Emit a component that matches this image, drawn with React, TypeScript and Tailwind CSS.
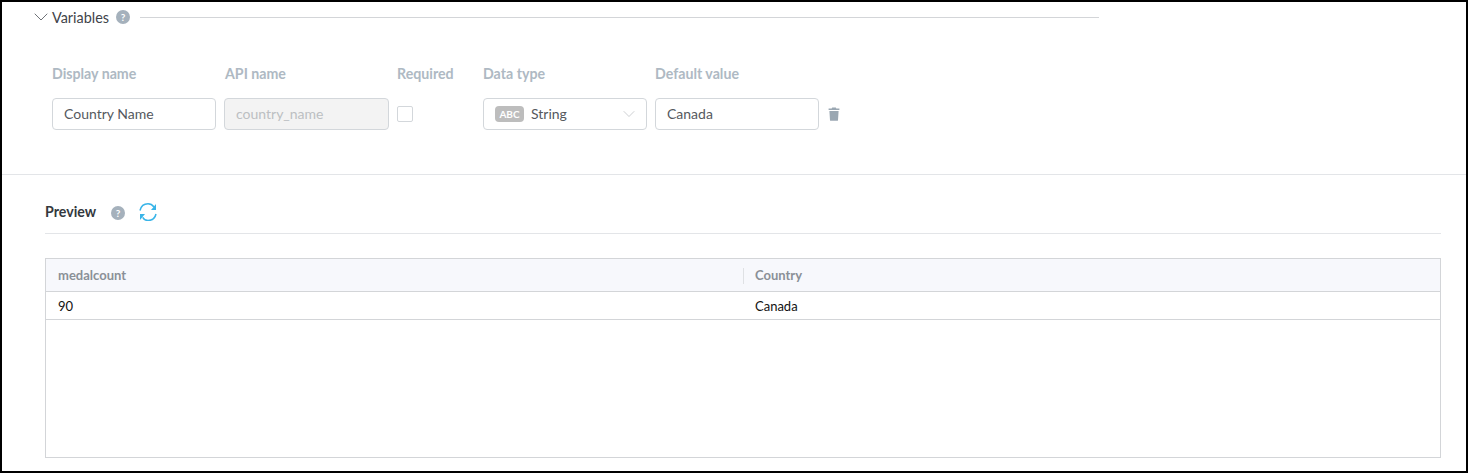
import { ChevronDown } from "lucide-react";

function HelpDot() {
  return (
    <span className="flex h-[14px] w-[14px] items-center justify-center rounded-full bg-[#a5b1bc] text-[10px] font-bold leading-none text-white">
      ?
    </span>
  );
}

function Label({ text, className }: { text: string; className: string }) {
  return <div className={`text-[14.2px] font-bold leading-5 text-[#aeb9c3] ${className}`}>{text}</div>;
}

function TrashIcon() {
  return (
    <svg width="12" height="14" viewBox="0 0 12 14" fill="#9aa7b2">
      <path d="M4.2 0.6h3.6l.5 1H11.400v1.500H.6V1.600h3.100z" />
      <path d="M1.400 4h9.200l-.6 9.200c0 .3-.3.6-.6.6H2.600c-.3 0-.6-.3-.6-.6z" />
    </svg>
  );
}

function RefreshIcon() {
  return (
    <svg width="18" height="18" viewBox="0 0 18 18" fill="none" stroke="#38b4e8" strokeWidth="1.5">
      <path d="M1 7.500C2 3.200 5.400 .8 9 .8c2.300 0 4.400 1.100 6 3.200" />
      <path d="M17 1v6h-5z" fill="#38b4e8" stroke="none" />
      <path d="M17 11c-1 4.200-4.400 6.500-8 6.500-2.300 0-4.200-1.100-5.300-3.200" />
      <path d="M1 17v-6h5z" fill="#38b4e8" stroke="none" />
    </svg>
  );
}

export default function App() {
  return (
    <div className="h-[473px] w-[1468px] overflow-hidden border-2 border-black bg-white font-['Lato',sans-serif]">
      <div className="h-[173px] border-b border-[#e3e5e8]">
        <div className="flex h-[30px] items-center pl-[27px]">
          <ChevronDown size={24} strokeWidth={0.8} className="text-[#4a4f55]" />
          <span className="ml-[-1px] mt-[1px] text-[14.4px] text-[#3f444a]">Variables</span>
          <span className="ml-[7px]">
            <HelpDot />
          </span>
          <div className="ml-[10px] h-px w-[959px] bg-[#d3d5d8]" />
        </div>

        <div className="mt-[32px] flex pl-[50px]">
          <Label text="Display name" className="w-[173px]" />
          <Label text="API name" className="w-[172px]" />
          <Label text="Required" className="w-[86px]" />
          <Label text="Data type" className="w-[172px]" />
          <Label text="Default value" className="w-[172px]" />
        </div>

        <div className="mt-[14px] flex items-center pl-[50px]">
          <div className="flex h-[32px] w-[164px] items-center rounded border border-[#d3d7db] px-[11px] text-sm text-[#55595e]">
            Country Name
          </div>
          <div className="ml-[8px] flex h-[32px] w-[165px] items-center rounded border border-[#d3d7db] bg-[#f3f3f3] px-[11px] text-sm text-[#bcbfc2]">
            country_name
          </div>
          <div className="ml-[8px] h-[16px] w-[16px] rounded-[2px] border border-[#d3d7db]" />
          <div className="ml-[70px] flex h-[32px] w-[164px] items-center rounded border border-[#d3d7db] pl-[11px] pr-[7px] text-sm text-[#55595e]">
            <span className="flex h-[16px] w-[29px] items-center justify-center rounded-[4px] bg-[#bdbdbd] text-[10px] font-bold text-white">
              ABC
            </span>
            <span className="ml-[7px] flex-1">String</span>
            <ChevronDown size={20} strokeWidth={0.7} className="text-[#a8adb2]" />
          </div>
          <div className="ml-[8px] flex h-[32px] w-[164px] items-center rounded border border-[#d3d7db] px-[11px] text-sm text-[#55595e]">
            Canada
          </div>
          <span className="ml-[9px]">
            <TrashIcon />
          </span>
        </div>
      </div>

      <div className="pl-[43px] pr-[25px]">
        <div className="flex h-[59px] items-end border-b border-[#e3e5e8] pb-[11px]">
          <span className="text-[14.2px] font-bold leading-[20px] text-[#33383d]">Preview</span>
          <span className="mb-[2px] ml-[15px]">
            <HelpDot />
          </span>
          <span className="mb-[1px] ml-[14px]">
            <RefreshIcon />
          </span>
        </div>

        <div className="mt-[24px] h-[200px] w-[1396px] border border-[#d3d5d8]">
          <div className="flex h-[33px] items-center border-b border-[#d3d5d8] bg-[#f7f8fc] pt-[1px] text-[13px] font-bold text-[#8a9097]">
            <div className="w-[697px] pl-[12px]">medalcount</div>
            <div className="h-[16px] w-px bg-[#dfe1e4]" />
            <div className="pl-[11px]">Country</div>
          </div>
          <div className="flex h-[28px] items-center border-b border-[#d3d5d8] pt-[2px] text-[13px] text-[#111111]">
            <div className="w-[698px] pl-[12px]">90</div>
            <div className="pl-[11px]">Canada</div>
          </div>
        </div>
      </div>
    </div>
  );
}
